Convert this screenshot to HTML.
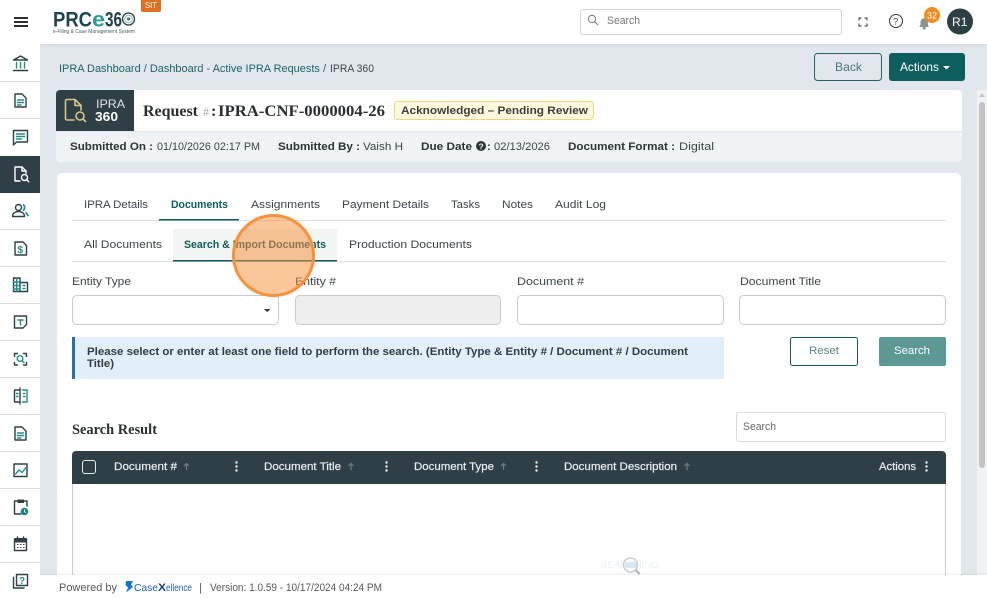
<!DOCTYPE html>
<html lang="en">
<head>
<meta charset="utf-8">
<title>IPRA 360</title>
<style>
html,body{margin:0;padding:0;width:987px;height:599px;overflow:hidden;background:#e1e7ed}
svg{display:block}
text{font-family:"Liberation Sans",sans-serif;font-size:11px;fill:#3c4548}
.b{font-weight:700;fill:#2c3436}
.t{fill:#0f5c5c;font-weight:700}
.l{fill:#1f6464}
.w{fill:#e9eeef;stroke:#e9eeef;stroke-width:.2}
.s{font-family:"Liberation Serif",serif;font-weight:700;fill:#2a2f31}
.i{fill:none;stroke:#2e4045;stroke-width:1.4;stroke-linejoin:round;stroke-linecap:round}
.a{fill:none;stroke:#1f8f8c;stroke-width:1.4;stroke-linecap:round}
</style>
</head>
<body>
<svg width="987" height="599" viewBox="0 0 987 599" xmlns="http://www.w3.org/2000/svg">
<defs>
<filter id="sh" x="-5%" y="-50%" width="110%" height="200%"><feDropShadow dx="0" dy="0" stdDeviation="2" flood-color="#000" flood-opacity=".12"/></filter>
</defs>
<rect width="987" height="599" fill="#e1e7ed"/>

<!-- scrollbar -->
<rect x="977" y="90" width="10" height="485" fill="#f0f2f4"/>
<rect x="979" y="102" width="6" height="366" rx="3" fill="#c4c4c4"/>
<path d="M982 93l-3 4h6z" fill="#c4c4c4"/>

<!-- page header row -->
<text lengthAdjust="spacingAndGlyphs" x="59" y="72" textLength="267" class="l">IPRA Dashboard / Dashboard - Active IPRA Requests /</text>
<text lengthAdjust="spacingAndGlyphs" x="330" y="72" textLength="44">IPRA 360</text>
<rect x="814.5" y="53.5" width="67" height="27" rx="3" fill="none" stroke="#1f6464"/>
<text lengthAdjust="spacingAndGlyphs" x="835" y="71" textLength="27" style="font-size:12px;fill:#48787a">Back</text>
<rect x="889" y="53" width="76" height="28" rx="3" fill="#0c5f5c"/>
<text lengthAdjust="spacingAndGlyphs" x="900" y="71" textLength="39" style="font-size:12px;fill:#fff">Actions</text>
<path d="M943 66h7l-3.500 3.500z" fill="#fff"/>

<!-- request card -->
<path d="M60 90H958a4 4 0 0 1 4 4V131H56V94a4 4 0 0 1 4-4z" fill="#fff"/>
<path d="M56 131H962V158a4 4 0 0 1-4 4H60a4 4 0 0 1-4-4z" fill="#eff3f5"/>
<rect x="56" y="131" width="906" height="1" fill="#e3e7ea"/>
<path d="M60 90H134V131H56V94a4 4 0 0 1 4-4z" fill="#2e4045"/>
<g fill="none" stroke="#d9c48f" stroke-width="1.600" stroke-linecap="round" stroke-linejoin="round">
<path d="M74 120H67a1.500 1.500 0 0 1-1.500-1.500V101a1.500 1.500 0 0 1 1.500-1.500H75L81 105.500V110"/>
<path d="M75 99.500V105.500H81"/>
<circle cx="80" cy="116" r="4"/>
<path d="M83 119l2.500 2.500"/>
</g>
<text lengthAdjust="spacingAndGlyphs" x="96" y="108" textLength="29" style="font-size:12px;fill:#dfe3e4">IPRA</text>
<text lengthAdjust="spacingAndGlyphs" x="95" y="121" textLength="23" style="font-size:13px;font-weight:700;fill:#fff">360</text>
<text lengthAdjust="spacingAndGlyphs" x="143" y="116" textLength="55" class="s" style="font-size:16px">Request</text>
<text lengthAdjust="spacingAndGlyphs" x="203" y="116" textLength="6" class="s" style="font-size:13px;fill:#aaa;font-weight:400">#</text>
<text x="211" y="116" class="s" style="font-size:16px">:</text>
<text lengthAdjust="spacingAndGlyphs" x="218" y="116" textLength="167" class="s" style="font-size:16px">IPRA-CNF-0000004-26</text>
<rect x="394.500" y="101.500" width="199" height="18" rx="3" fill="#fff8dc" stroke="#f0d680"/>
<text lengthAdjust="spacingAndGlyphs" x="401" y="114" textLength="187" style="font-weight:700;fill:#3a3f40">Acknowledged – Pending Review</text>

<text lengthAdjust="spacingAndGlyphs" x="70" y="150" textLength="83" class="b">Submitted On :</text>
<text lengthAdjust="spacingAndGlyphs" x="157" y="150" textLength="103">01/10/2026 02:17 PM</text>
<text lengthAdjust="spacingAndGlyphs" x="278" y="150" textLength="82" class="b">Submitted By :</text>
<text lengthAdjust="spacingAndGlyphs" x="363" y="150" textLength="40">Vaish H</text>
<text lengthAdjust="spacingAndGlyphs" x="421" y="150" textLength="51" class="b">Due Date</text>
<circle cx="481" cy="146" r="5" fill="#2c3436"/>
<text x="478.500" y="149.500" style="font-size:8.500px;font-weight:700;fill:#eff3f5">?</text>
<text x="487" y="150" class="b">:</text>
<text lengthAdjust="spacingAndGlyphs" x="494" y="150" textLength="56">02/13/2026</text>
<text lengthAdjust="spacingAndGlyphs" x="568" y="150" textLength="107" class="b">Document Format :</text>
<text lengthAdjust="spacingAndGlyphs" x="679" y="150" textLength="35">Digital</text>

<!-- main card -->
<rect x="57" y="173" width="904" height="420" rx="5" fill="#fff"/>
<text lengthAdjust="spacingAndGlyphs" x="84" y="208" textLength="64">IPRA Details</text>
<text lengthAdjust="spacingAndGlyphs" x="171" y="208" textLength="57" class="t">Documents</text>
<text lengthAdjust="spacingAndGlyphs" x="251" y="208" textLength="69">Assignments</text>
<text lengthAdjust="spacingAndGlyphs" x="342" y="208" textLength="87">Payment Details</text>
<text lengthAdjust="spacingAndGlyphs" x="451" y="208" textLength="29">Tasks</text>
<text lengthAdjust="spacingAndGlyphs" x="502" y="208" textLength="31">Notes</text>
<text lengthAdjust="spacingAndGlyphs" x="555" y="208" textLength="51">Audit Log</text>
<rect x="72" y="220" width="874" height="1" fill="#dedede"/>
<rect x="159" y="219" width="80" height="1.500" fill="#0f5c5c"/>

<rect x="173" y="229" width="164" height="32" fill="#f3f4f4"/>
<text lengthAdjust="spacingAndGlyphs" x="84" y="248" textLength="78">All Documents</text>
<text lengthAdjust="spacingAndGlyphs" x="184" y="248" textLength="142" class="t">Search &amp; Import Documents</text>
<text lengthAdjust="spacingAndGlyphs" x="349" y="248" textLength="123">Production Documents</text>
<rect x="72" y="261" width="874" height="1" fill="#dedede"/>
<rect x="173" y="260" width="164" height="1.500" fill="#0f5c5c"/>

<text lengthAdjust="spacingAndGlyphs" x="72" y="285" textLength="59">Entity Type</text>
<text lengthAdjust="spacingAndGlyphs" x="295" y="285" textLength="41">Entity #</text>
<text lengthAdjust="spacingAndGlyphs" x="517" y="285" textLength="67">Document #</text>
<text lengthAdjust="spacingAndGlyphs" x="740" y="285" textLength="81">Document Title</text>
<rect x="72.500" y="295.500" width="206" height="29" rx="4" fill="#fff" stroke="#ccc"/>
<path d="M264 309h6.500l-3.250 3z" fill="#333"/>
<rect x="295.500" y="295.500" width="205" height="29" rx="4" fill="#eee" stroke="#ccc"/>
<rect x="517.500" y="295.500" width="206" height="29" rx="4" fill="#fff" stroke="#ccc"/>
<rect x="739.500" y="295.500" width="206" height="29" rx="4" fill="#fff" stroke="#ccc"/>

<rect x="72" y="337" width="652" height="42" rx="2" fill="#e1effb"/>
<rect x="72" y="337" width="3" height="42" fill="#2a6fa8"/>
<text lengthAdjust="spacingAndGlyphs" x="87" y="355" textLength="601" class="b" style="fill:#333c40">Please select or enter at least one field to perform the search. (Entity Type &amp; Entity # / Document # / Document</text>
<text lengthAdjust="spacingAndGlyphs" x="87" y="367" textLength="27" class="b" style="fill:#333c40">Title)</text>

<rect x="790.500" y="337.500" width="67" height="28" rx="2" fill="#fff" stroke="#0f5c5c"/>
<text lengthAdjust="spacingAndGlyphs" x="809" y="354" textLength="30" style="fill:#5a8384">Reset</text>
<rect x="879" y="337" width="67" height="29" rx="2" fill="#5b9896"/>
<text lengthAdjust="spacingAndGlyphs" x="894" y="354" textLength="36" style="fill:#fff">Search</text>

<text lengthAdjust="spacingAndGlyphs" x="72" y="434" textLength="85" class="s" style="font-size:14.500px">Search Result</text>
<rect x="736.500" y="412.500" width="209" height="29" rx="2" fill="#fff" stroke="#dcdcdc"/>
<text lengthAdjust="spacingAndGlyphs" x="743" y="430" textLength="33" style="fill:#666">Search</text>

<!-- table -->
<rect x="72.500" y="460" width="873" height="130" fill="#fff" stroke="#ccc"/>
<path d="M76 451H942a4 4 0 0 1 4 4V484H72V455a4 4 0 0 1 4-4z" fill="#2e4045"/>
<rect x="82.500" y="460.500" width="13" height="13" rx="2.500" fill="none" stroke="#e8ecec"/>
<text lengthAdjust="spacingAndGlyphs" x="114" y="470" textLength="63" class="w">Document #</text>
<text lengthAdjust="spacingAndGlyphs" x="264" y="470" textLength="77" class="w">Document Title</text>
<text lengthAdjust="spacingAndGlyphs" x="414" y="470" textLength="80" class="w">Document Type</text>
<text lengthAdjust="spacingAndGlyphs" x="564" y="470" textLength="113" class="w">Document Description</text>
<text lengthAdjust="spacingAndGlyphs" x="879" y="470" textLength="37" class="w">Actions</text>
<g fill="none" stroke="#6d7f83" stroke-width="1.200">
<path d="M186.500 470v-6M184 466l2.500-2.500 2.500 2.500"/>
<path d="M351 470v-6M348.500 466l2.500-2.500 2.500 2.500"/>
<path d="M503.500 470v-6M501 466l2.500-2.500 2.500 2.500"/>
<path d="M687 470v-6M684.500 466l2.500-2.500 2.500 2.500"/>
</g>
<g fill="#eef2f2">
<circle cx="236.500" cy="462.500" r="1.200"/><circle cx="236.500" cy="466.500" r="1.200"/><circle cx="236.500" cy="470.500" r="1.200"/>
<circle cx="386.500" cy="462.500" r="1.200"/><circle cx="386.500" cy="466.500" r="1.200"/><circle cx="386.500" cy="470.500" r="1.200"/>
<circle cx="536.500" cy="462.500" r="1.200"/><circle cx="536.500" cy="466.500" r="1.200"/><circle cx="536.500" cy="470.500" r="1.200"/>
<circle cx="926.500" cy="462.500" r="1.200"/><circle cx="926.500" cy="466.500" r="1.200"/><circle cx="926.500" cy="470.500" r="1.200"/>
</g>

<!-- loader -->
<text lengthAdjust="spacingAndGlyphs" x="601" y="568" textLength="58" style="font-size:9px;fill:#ecf1f4">SEARCHING</text>
<rect x="625" y="562" width="12" height="6" rx="2" fill="#d8e8f2"/>
<circle cx="630.500" cy="565" r="7" fill="none" stroke="#c9d0d4" stroke-width="1.500"/>
<path d="M635.500 570l4 4" stroke="#aab3b8" stroke-width="2"/>

<!-- footer -->
<rect x="40" y="575" width="947" height="24" fill="#fff" filter="url(#sh)"/>
<text lengthAdjust="spacingAndGlyphs" x="59" y="591" textLength="58" style="fill:#55595b">Powered by</text>
<path d="M126 581H133L131 584.500L133 587L126 592.500L128 587.500L125.500 585z" fill="#1476c8"/>
<text lengthAdjust="spacingAndGlyphs" x="134" y="591" textLength="24" style="fill:#1c5fa8;font-size:10.500px">Case</text>
<text lengthAdjust="spacingAndGlyphs" x="158" y="591" textLength="8" style="fill:#123f85;font-weight:700;font-size:11px">X</text>
<text lengthAdjust="spacingAndGlyphs" x="166" y="591" textLength="26" style="fill:#1c5fa8;font-size:10.500px">ellence</text>
<text x="199" y="591" style="fill:#55595b">|</text>
<text lengthAdjust="spacingAndGlyphs" x="210" y="591" textLength="172" style="fill:#55595b">Version: 1.0.59 - 10/17/2024 04:24 PM</text>

<!-- top bar -->
<rect x="0" y="0" width="987" height="44" fill="#fff" filter="url(#sh)"/>
<rect x="14" y="17" width="14" height="2" fill="#2b2f31"/><rect x="14" y="21" width="14" height="2" fill="#2b2f31"/><rect x="14" y="25" width="14" height="2" fill="#2b2f31"/>
<text lengthAdjust="spacingAndGlyphs" x="53" y="26.500" textLength="39" style="font-size:21.500px;font-weight:700;fill:#1e4450">PRC</text>
<text lengthAdjust="spacingAndGlyphs" x="92" y="26.500" textLength="13" style="font-size:21.500px;font-weight:700;fill:#2a9a9c">e</text>
<text lengthAdjust="spacingAndGlyphs" x="105" y="26.500" textLength="17" style="font-size:21.500px;font-weight:700;fill:#1e4450">36</text>
<g fill="none">
<circle cx="128.500" cy="19" r="6" stroke="#2a3f48" stroke-width="1.300"/>
<circle cx="128.500" cy="19" r="3.800" stroke="#9ab5b5" stroke-width="1"/>
<circle cx="128.500" cy="19" r="1.600" fill="#2a7f80"/>
</g>
<text lengthAdjust="spacingAndGlyphs" x="53" y="33" textLength="82" style="font-size:5.500px;fill:#4a5c63">e-Filing &amp; Case Management System</text>
<path d="M141 0H161V10a2 2 0 0 1-2 2H143a2 2 0 0 1-2-2z" fill="#e0701e"/>
<text lengthAdjust="spacingAndGlyphs" x="145" y="8" textLength="12" style="font-size:8px;fill:#fff">SIT</text>

<rect x="580.500" y="9.500" width="261" height="25" rx="2" fill="#fff" stroke="#d4d4d4"/>
<circle cx="592" cy="19" r="3.600" fill="none" stroke="#777" stroke-width="1"/>
<path d="M594.500 21.500l3.500 3.500" stroke="#777" stroke-width="1.100"/>
<text lengthAdjust="spacingAndGlyphs" x="607" y="24" textLength="33" style="fill:#777">Search</text>
<path d="M859 20.500v-2.500h2.500M864.500 18h2.500v2.500M867 23.500v2.500h-2.500M861.500 26h-2.500v-2.500" fill="none" stroke="#333" stroke-width="1"/>
<circle cx="896" cy="21" r="6.500" fill="none" stroke="#444" stroke-width="1.100"/>
<text x="893" y="24.500" style="font-size:9.500px;fill:#444">?</text>
<path d="M919 27c1.500-1 1.500-2 1.500-5a3.700 3.700 0 0 1 7.400 0c0 3 0 4 1.500 5z" fill="#8b9396"/>
<circle cx="924.200" cy="28" r="1.500" fill="#8b9396"/>
<circle cx="932" cy="15" r="8" fill="#ee8e22"/>
<text lengthAdjust="spacingAndGlyphs" x="927" y="18.500" textLength="10" style="font-size:9.500px;fill:#fff">32</text>
<circle cx="960" cy="21.500" r="13" fill="#2e4045"/>
<text lengthAdjust="spacingAndGlyphs" x="952" y="26" textLength="15.500" style="font-size:12px;fill:#fff">R1</text>

<!-- sidebar -->
<rect x="0" y="44" width="40" height="555" fill="#fff"/>
<g fill="#dcdcdc">
<rect y="81" width="40" height="1"/><rect y="118" width="40" height="1"/><rect y="229" width="40" height="1"/><rect y="266" width="40" height="1"/><rect y="303" width="40" height="1"/><rect y="340" width="40" height="1"/><rect y="377" width="40" height="1"/><rect y="414" width="40" height="1"/><rect y="451" width="40" height="1"/><rect y="488" width="40" height="1"/><rect y="525" width="40" height="1"/><rect y="562" width="40" height="1"/>
</g>
<rect y="156" width="40" height="37" fill="#2e4045"/>

<!-- 1 bank -->
<path class="i" d="M13.500 60L20.500 56L27.500 60H13.500z"/>
<path class="a" d="M16.500 62.500V68M20.500 62.500V68M24.500 62.500V68"/>
<path class="i" d="M13.500 70.500H27.500"/>
<!-- 2 doc -->
<path class="i" d="M15 94H22L26 98V107H15z"/>
<path class="a" d="M17.500 100H23.500M17.500 102.500H23.500M17.500 105H21"/>
<!-- 3 chat -->
<path class="i" d="M13.500 130.500H27.500V142H16.500L13.500 145z"/>
<path class="a" d="M16.500 134H24.500M16.500 136.500H24.500M16.500 139H21.500"/>
<!-- 4 active -->
<g fill="none" stroke="#fff" stroke-width="1.400" stroke-linecap="round" stroke-linejoin="round">
<path d="M20 181H15V167H22L26 171V173"/>
<path d="M22 167V171H26"/>
<circle cx="24.500" cy="177.500" r="3"/>
<path d="M26.700 179.700L28.700 181.700"/>
</g>
<!-- 5 people -->
<circle class="i" cx="18.500" cy="207.500" r="3"/>
<path class="i" d="M12.500 216.500c0-3.500 3-5 6-5s6 1.500 6 5z"/>
<path class="a" d="M23.500 205c1.500 1 1.500 4 0 5M26 213l2 2.500" style="stroke-width:1.800"/>
<!-- 6 doc $ -->
<path class="i" d="M15 242H23L26.500 245.500V255H15z"/>
<text x="17.500" y="253" style="font-size:10px;font-weight:700;fill:#1f8f8c">$</text>
<!-- 7 building -->
<path class="i" d="M13.500 291.500V278H20V291.500zM20 282.500H27.500V291.500H20"/>
<path class="a" d="M13.500 282H20M13.500 285.500H20M13.500 289H20M16.700 278V291M23 285.500H25M23 288.500H25"/>
<!-- 8 note T -->
<path class="i" d="M14.500 316H26.500V324.500L23 328H14.500z"/>
<path class="a" d="M18 320H23M20.500 320V325"/>
<!-- 9 scan -->
<path class="i" d="M14.500 356.500V353.500H17.500M23.500 353.500H26.500V356.500M26.500 362.500V365H23.500M17.500 365H14.500V362.500"/>
<circle class="a" cx="20" cy="358.500" r="2.800"/>
<path class="a" d="M22 360.500L24 362.500"/>
<!-- 10 book -->
<path class="i" d="M19 390H14.500V402H19M20 388V404"/>
<path class="a" d="M22.500 390H27V402H22.500M16.500 393.500H18M16.500 396.500H18M23.500 393.500H25M23.500 396.500H25"/>
<!-- 11 doc -->
<path class="i" d="M15 427H22L26 431V440H15z"/>
<path class="a" d="M17.500 433H23.500M17.500 435.500H23.500M17.500 438H21"/>
<!-- 12 chart -->
<rect class="i" x="14" y="464" width="13" height="12.500"/>
<path class="a" d="M15.500 474L19 470L22 472.500L26 467.500"/>
<!-- 13 clipboard clock -->
<path class="i" d="M17.500 501H14.500V514H21M24 501H27V506"/>
<path d="M17.500 499.500H24V503H17.500z" fill="#2e4045"/>
<circle cx="24.500" cy="511.500" r="3.800" fill="#1f7f80"/>
<path d="M24.500 509.500V511.700L26 512.500" stroke="#fff" stroke-width=".8" fill="none"/>
<!-- 14 calendar -->
<rect class="i" x="14.500" y="539" width="12" height="11.500"/>
<path d="M14.500 538H26.500V542.500H14.500z" fill="#2e4045"/>
<path class="i" d="M17.500 537V538.500M23.500 537V538.500"/>
<path d="M17 544.500h1.500M20 544.500h1.500M23 544.500h1.500M17 547.500h1.500M20 547.500h1.500M23 547.500h1.500" stroke="#2e4045" stroke-width="1"/>
<!-- 15 help -->
<path class="i" d="M13.500 577.500V588H24"/>
<rect class="i" x="16.500" y="574.500" width="11" height="11"/>
<text x="19" y="584" style="font-size:10px;fill:#1f8f8c;font-weight:700">?</text>

<!-- click highlight -->
<circle cx="273.500" cy="255.500" r="40" fill="#f5923e" fill-opacity=".52" stroke="#f5923e" stroke-width="3"/>
</svg>
</body>
</html>
